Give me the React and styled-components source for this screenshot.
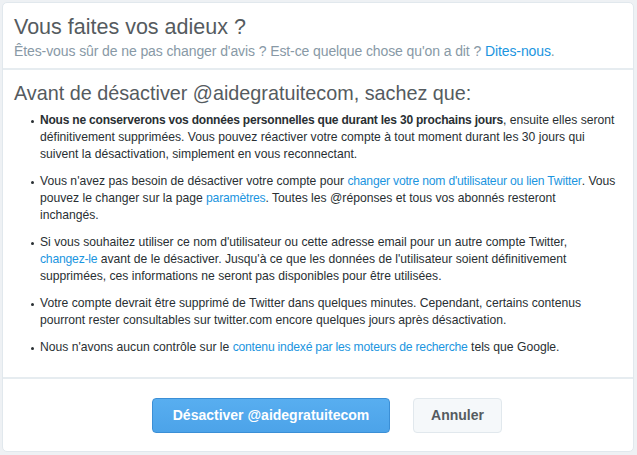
import styled, { createGlobalStyle } from 'styled-components';

const GlobalStyle = createGlobalStyle`
  html, body {
    margin: 0;
    padding: 0;
    background: #eef1f4;
    font-family: "Liberation Sans", Arial, sans-serif;
  }
`;

const Page = styled.div`
  padding: 2px 3px 3px 2px;
`;

const Card = styled.div`
  width: 630px;
  height: 448px;
  background: #fff;
  border: 1px solid #e1e8ed;
  border-radius: 5px;
  display: flex;
  flex-direction: column;
`;

const Header = styled.div`
  padding: 10px 11px 0;
  height: 55px;
  border-bottom: 2px solid #e6ecf0;
`;

const Title = styled.h2`
  margin: 0;
  font-size: 21.5px;
  font-weight: 400;
  line-height: 28px;
  color: #555b60;
`;

const Subtitle = styled.p`
  margin: 2px 0 0;
  font-size: 14px;
  line-height: 17px;
  color: #8899a6;
  letter-spacing: -0.1px;
`;

const Link = styled.a`
  color: #1b95e0;
  text-decoration: none;
`;

const Body = styled.div`
  flex: 1;
  padding: 10px 6px 0 11px;
  border-bottom: 2px solid #e6ecf0;
`;

const Heading = styled.h3`
  margin: 0;
  font-size: 19.8px;
  font-weight: 400;
  line-height: 26px;
  color: #555b60;
`;

const List = styled.ul`
  margin: 6px 0 0;
  padding: 0 0 0 26px;
  list-style: none;
`;

const Item = styled.li`
  position: relative;
  margin-bottom: 10px;
  font-size: 12.15px;
  line-height: 17px;
  color: #292f33;
  white-space: nowrap;

  &::before {
    content: '';
    position: absolute;
    left: -9px;
    top: 8px;
    width: 3px;
    height: 3px;
    border-radius: 50%;
    background: #292f33;
  }

  b {
    font-size: 12px;
    letter-spacing: -0.2px;
  }

  ${Link} {
    letter-spacing: -0.2px;
  }
`;

const Footer = styled.div`
  height: 72px;
  display: flex;
  align-items: center;
  justify-content: center;
  gap: 23px;
  padding-left: 18px;
`;

const Button = styled.button`
  height: 35px;
  padding: 0 16px;
  border-radius: 4px;
  font-family: "Liberation Sans", Arial, sans-serif;
  font-size: 14px;
  font-weight: 700;
  cursor: pointer;
  ${(p) =>
    p.primary
      ? `
    width: 238px;
    color: #fff;
    background: linear-gradient(#58aef0, #4ca3e9);
    border: 1px solid #3b8fd6;
  `
      : `
    width: 89px;
    color: #555b60;
    background: #f5f8fa;
    border: 1px solid #e1e8ed;
  `}
`;

export default function App() {
  return (
    <Page>
      <GlobalStyle />
      <Card>
        <Header>
          <Title>Vous faites vos adieux ?</Title>
          <Subtitle>
            Êtes-vous sûr de ne pas changer d'avis ? Est-ce quelque chose qu'on a dit ?{' '}
            <Link href="#">Dites-nous</Link>.
          </Subtitle>
        </Header>
        <Body>
          <Heading>Avant de désactiver @aidegratuitecom, sachez que:</Heading>
          <List>
            <Item>
              <b>Nous ne conserverons vos données personnelles que durant les 30 prochains jours</b>, ensuite elles seront
              <br />
              définitivement supprimées. Vous pouvez réactiver votre compte à tout moment durant les 30 jours qui
              <br />
              suivent la désactivation, simplement en vous reconnectant.
            </Item>
            <Item>
              Vous n'avez pas besoin de désactiver votre compte pour{' '}
              <Link href="#">changer votre nom d'utilisateur ou lien Twitter</Link>. Vous
              <br />
              pouvez le changer sur la page <Link href="#">paramètres</Link>. Toutes les @réponses et tous vos abonnés resteront
              <br />
              inchangés.
            </Item>
            <Item>
              Si vous souhaitez utiliser ce nom d'utilisateur ou cette adresse email pour un autre compte Twitter,
              <br />
              <Link href="#">changez-le</Link> avant de le désactiver. Jusqu'à ce que les données de l'utilisateur soient définitivement
              <br />
              supprimées, ces informations ne seront pas disponibles pour être utilisées.
            </Item>
            <Item>
              Votre compte devrait être supprimé de Twitter dans quelques minutes. Cependant, certains contenus
              <br />
              pourront rester consultables sur twitter.com encore quelques jours après désactivation.
            </Item>
            <Item>
              Nous n'avons aucun contrôle sur le <Link href="#">contenu indexé par les moteurs de recherche</Link> tels
              que Google.
            </Item>
          </List>
        </Body>
        <Footer>
          <Button primary>Désactiver @aidegratuitecom</Button>
          <Button>Annuler</Button>
        </Footer>
      </Card>
    </Page>
  );
}
